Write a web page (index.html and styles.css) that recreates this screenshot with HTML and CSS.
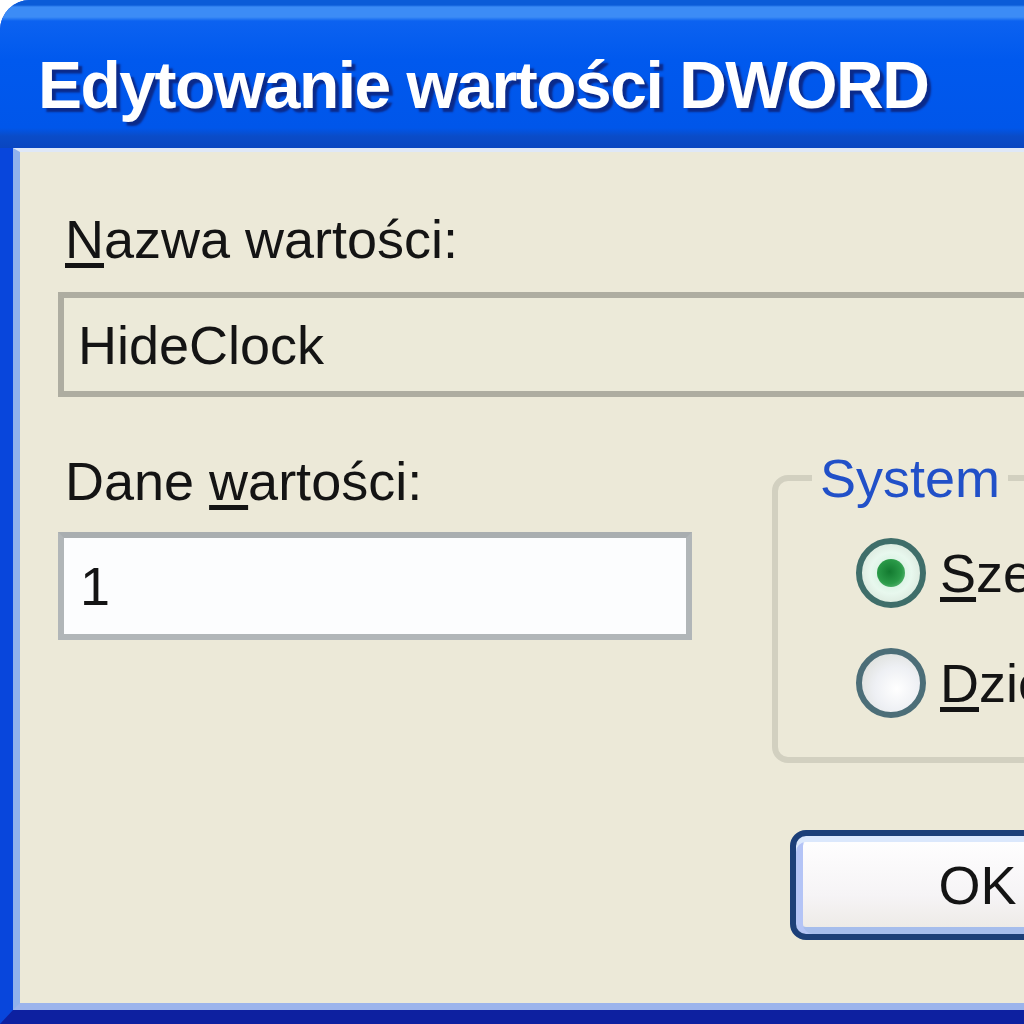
FILE: index.html
```html
<!DOCTYPE html>
<html lang="pl">
<head>
<meta charset="utf-8">
<title>Edytowanie wartości DWORD</title>
<link rel="stylesheet" href="styles.css">
</head>
<body>
<div class="window">
  <div class="titlebar"><span class="title">Edytowanie wartości DWORD</span></div>
  <div class="frame">
    <div class="client">
      <div class="label"><u>N</u>azwa wartości:</div>
      <div class="field readonly">HideClock</div>
      <div class="row">
        <div class="col-left">
          <div class="label">Dane <u>w</u>artości:</div>
          <div class="field edit">1</div>
        </div>
        <div class="col-right">
          <fieldset class="group">
            <legend>System</legend>
            <div class="radio-row"><span class="radio checked"><span class="dot"></span></span><span class="radio-label"><u>S</u>zesnastkowy</span></div>
            <div class="radio-row second"><span class="radio"></span><span class="radio-label"><u>D</u>ziesiętny</span></div>
          </fieldset>
          <div class="button">OK</div>
        </div>
      </div>
    </div>
  </div>
</div>
</body>
</html>
```

FILE: styles.css
```css
html, body {
  margin: 0;
  padding: 0;
  background: #ffffff;
}
body {
  width: 1024px;
  height: 1024px;
  overflow: hidden;
  font-family: "Liberation Sans", Arial, sans-serif;
}
.window {
  width: 1400px;
  height: 1024px;
  display: flex;
  flex-direction: column;
  border-top-left-radius: 30px;
  overflow: hidden;
  background: #0846dc;
}
.titlebar {
  height: 148px;
  flex: none;
  box-sizing: border-box;
  padding: 47px 0 0 38px;
  background: linear-gradient(to bottom,
    #0b5cd8 0px, #0b5cd8 5px,
    #3c8cf6 7px, #3c8cf6 17px,
    #0c62f0 21px, #0059ee 60px,
    #0056ea 128px, #0a4cc8 136px,
    #0a46c0 148px);
}
.title {
  font-family: "Liberation Sans", Arial, sans-serif;
  font-weight: bold;
  font-size: 66px;
  line-height: 76px;
  letter-spacing: -1.5px;
  color: #ffffff;
  text-shadow: 4px 4px 2px #0b2a8a;
  white-space: nowrap;
}
.frame {
  flex: 1;
  display: flex;
  border-left: 13px solid #0846dc;
  border-bottom: 14px solid #0d20a0;
}
.client {
  flex: 1;
  box-sizing: border-box;
  border-left: 7px solid #90b2ec;
  border-top: 4px solid #dfe8f8;
  border-bottom: 7px solid #9cb4ec;
  background: #ece9d8;
  padding: 57px 0 0 38px;
}
.label {
  font-size: 54px;
  line-height: 60px;
  height: 60px;
  padding-left: 7px;
  color: #141414;
  white-space: nowrap;
  margin-bottom: 23px;
}
u {
  text-decoration-thickness: 5px;
  text-underline-offset: 5px;
}
.field {
  box-sizing: border-box;
  display: flex;
  align-items: center;
  font-size: 54px;
  line-height: 60px;
  padding-left: 14px;
  color: #141414;
}
.field.readonly {
  height: 105px;
  border: 6px solid #aeada1;
  background: #ecead9;
  width: 1300px;
}
.field.edit {
  height: 108px;
  border: 6px solid #b1b6b8;
  border-top-color: #a9aeb0;
  background: #fcfdfe;
  width: 634px;
  padding-left: 16px;
}
.row {
  display: flex;
  margin-top: 54px;
}
.col-left .label {
  margin-bottom: 21px;
}
.col-left {
  width: 634px;
  flex: none;
}
.col-right {
  margin-left: 80px;
  flex: none;
  width: 600px;
}
.group {
  margin: -3px 0 0 0;
  border: 6px solid #d2d0c0;
  border-radius: 16px;
  padding: 30px 0 39px 34px;
  min-width: 0;
}
.group legend {
  padding: 0 8px;
  font-size: 54px;
  line-height: 60px;
  color: #2150c8;
}
.radio-row {
  display: flex;
  align-items: center;
  gap: 14px;
  height: 70px;
  margin-left: 44px;
}
.radio-row.second {
  margin-top: 40px;
}
.radio {
  box-sizing: border-box;
  width: 70px;
  height: 70px;
  flex: none;
  border-radius: 50%;
  border: 6px solid #4c6e78;
  background: radial-gradient(circle at 60% 60%, #ffffff 0%, #eef0f4 45%, #d6d8d0 100%);
  display: flex;
  align-items: center;
  justify-content: center;
}
.radio.checked {
  border-color: #3f6e6a;
  background: radial-gradient(circle at 50% 50%, #c8ecd6 0%, #e8f8ee 50%, #d0dcd0 100%);
}
.dot {
  width: 28px;
  height: 28px;
  border-radius: 50%;
  background: radial-gradient(circle at 45% 45%, #137a30 0%, #2a9a48 55%, #7ac890 100%);
}
.radio-label {
  font-size: 54px;
  line-height: 60px;
  color: #141414;
  white-space: nowrap;
}
.button {
  margin: 67px 0 0 18px;
  box-sizing: border-box;
  width: 375px;
  height: 110px;
  border: 6px solid #1c3f78;
  border-radius: 16px;
  background: linear-gradient(to bottom, #ffffff 0%, #f6f4f6 60%, #ece9e4 100%);
  box-shadow: inset 0 6px 0 #dbe8fc, inset 7px 0 0 #b4c4f6, inset 0 -7px 0 #a6bdec, inset -7px 0 0 #b4c4f6;
  display: flex;
  align-items: center;
  justify-content: center;
  font-size: 54px;
  line-height: 60px;
  color: #141414;
}
```
